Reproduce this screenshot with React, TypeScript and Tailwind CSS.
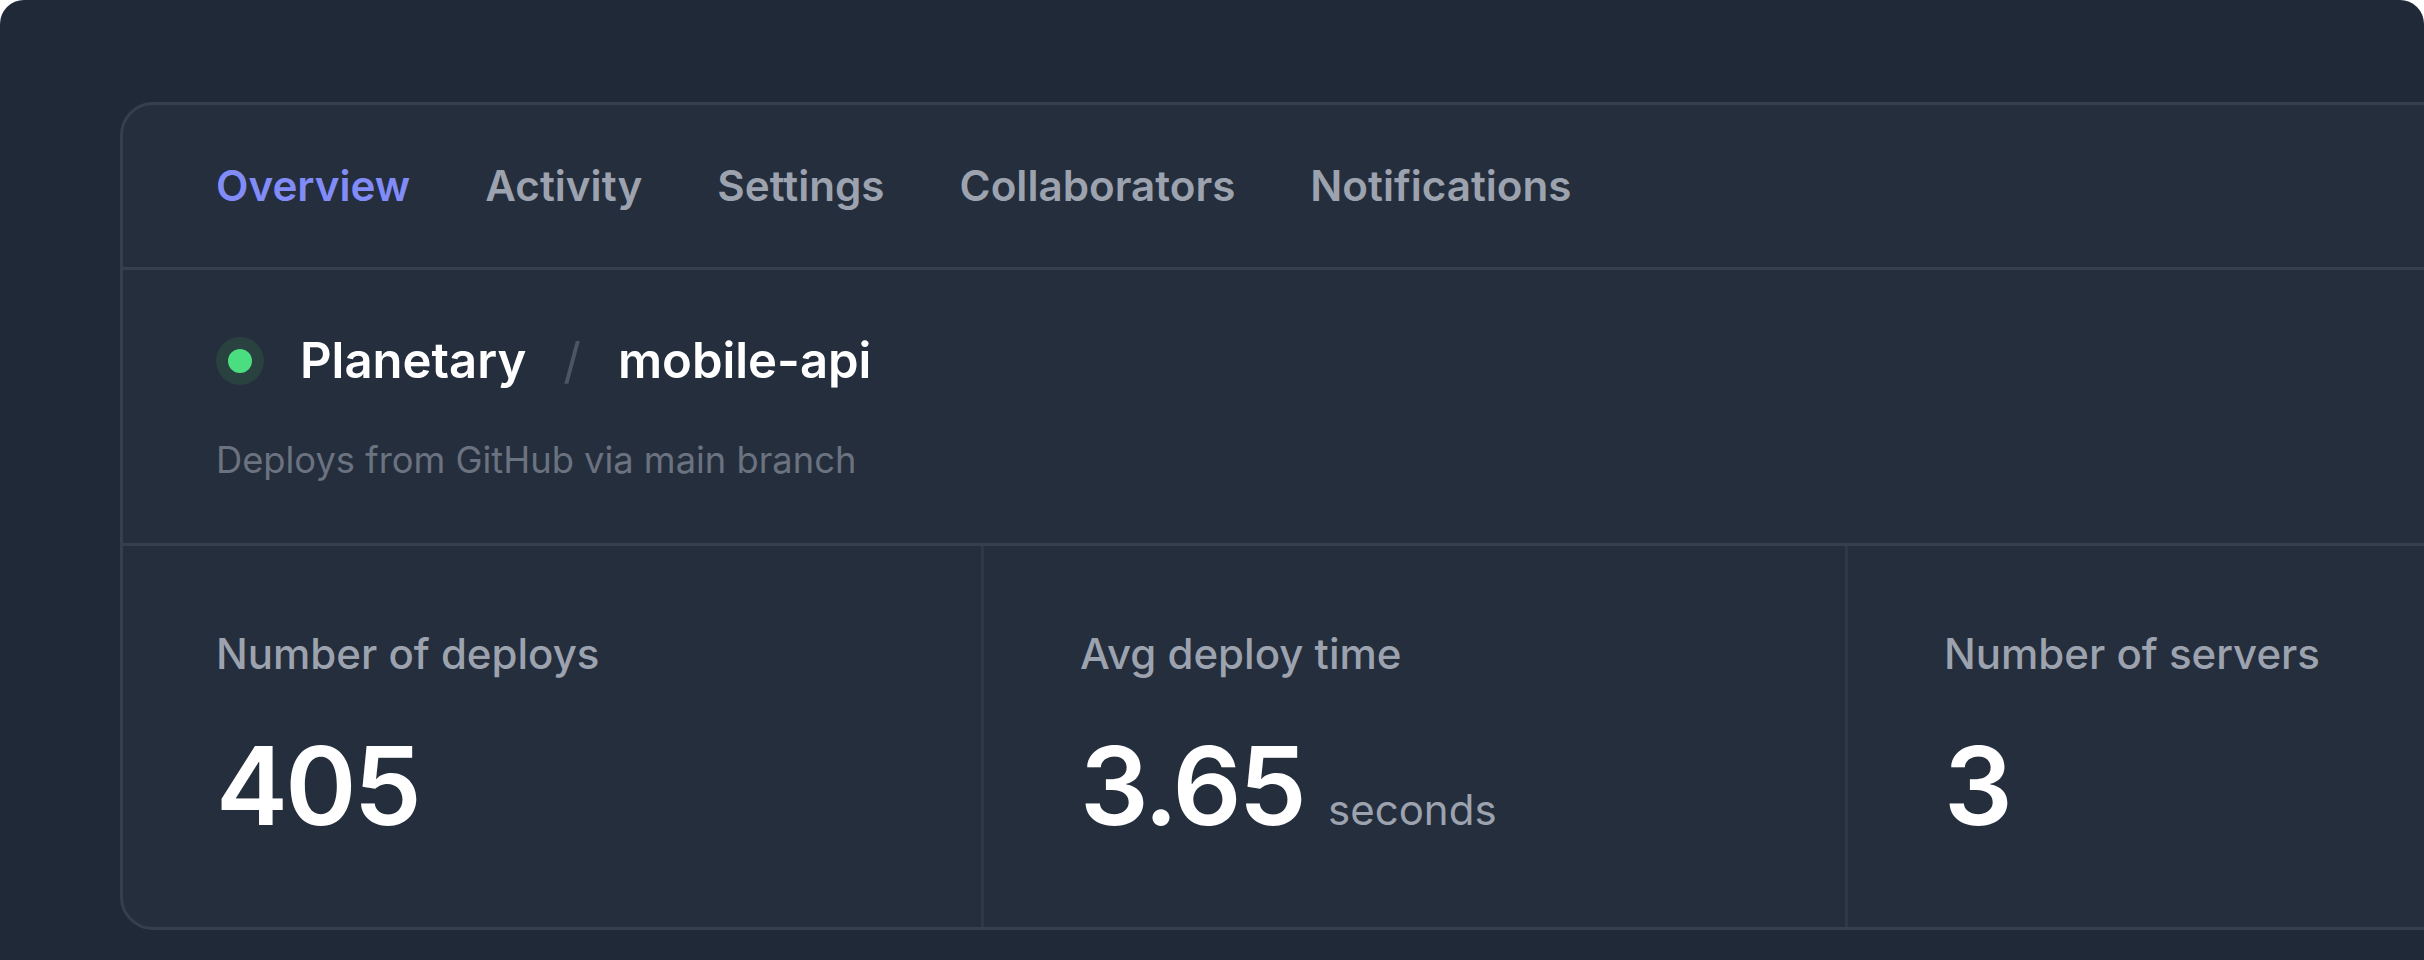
import React from "react";

const tabs = [
  { name: "Overview", current: true },
  { name: "Activity", current: false },
  { name: "Settings", current: false },
  { name: "Collaborators", current: false },
  { name: "Notifications", current: false },
];

const stats = [
  { name: "Number of deploys", value: "405", unit: "" },
  { name: "Avg deploy time", value: "3.65", unit: "seconds" },
  { name: "Number of servers", value: "3", unit: "" },
];

export default function App() {
  return (
    <div className="min-h-screen bg-white" style={{ fontFamily: "Inter, 'Noto Sans', sans-serif" }}>
      <div className="h-[960px] overflow-hidden rounded-t-[24px] bg-[#202938] pl-[120px] pt-[102px]">
        <div className="w-[2600px] overflow-hidden rounded-[33px] border-[3px] border-[#363f4d] bg-[#252e3d]">
          <nav className="border-b-[3px] border-[#363f4d] pt-[45px] pb-[45px]">
            <ul className="flex gap-x-[75px] px-[93px] text-[42.2px] leading-[72px] font-semibold text-[#9ca3af]">
              {tabs.map((t) => (
                <li key={t.name} className={t.current ? "text-[#818cf8]" : ""}>
                  {t.name}
                </li>
              ))}
            </ul>
          </nav>
          <div className="px-[93px] pt-[55px] pb-[59px]">
            <div className="flex items-center gap-x-[36px]">
              <div className="flex h-[48px] w-[48px] items-center justify-center rounded-full bg-[#29413f]">
                <div className="h-[24px] w-[24px] rounded-full bg-[#4ade80]" />
              </div>
              <h1 className="flex gap-x-[37px] text-[49px] leading-[72px] text-white">
                <span className="font-semibold">Planetary</span>
                <span className="text-[#4b5563]">/</span>
                <span className="font-semibold">mobile-api</span>
              </h1>
            </div>
            <p className="mt-[39px] text-[36.3px] leading-[48px] text-[#6b7280]">
              Deploys from GitHub via main branch
            </p>
          </div>
          <div className="grid grid-cols-[858px_864px_1fr] border-t-[3px] border-[#363f4d]">
            {stats.map((s, i) => (
              <div
                key={s.name}
                className={
                  i > 0
                    ? "border-l-[3px] border-[#2f3847] pl-[96px] pr-[93px] pt-[72px] pb-[81px]"
                    : "px-[93px] pt-[72px] pb-[81px]"
                }
              >
                <p className="text-[42px] leading-[72px] font-medium text-[#9ca3af]">{s.name}</p>
                <p className="mt-[36px] flex items-baseline gap-x-[24px]">
                  <span className="text-[108px] leading-[120px] font-semibold tracking-tight text-white">
                    {s.value}
                  </span>
                  {s.unit ? (
                    <span className="text-[42px] leading-[60px] text-[#9ca3af]">{s.unit}</span>
                  ) : null}
                </p>
              </div>
            ))}
          </div>
        </div>
      </div>
    </div>
  );
}
